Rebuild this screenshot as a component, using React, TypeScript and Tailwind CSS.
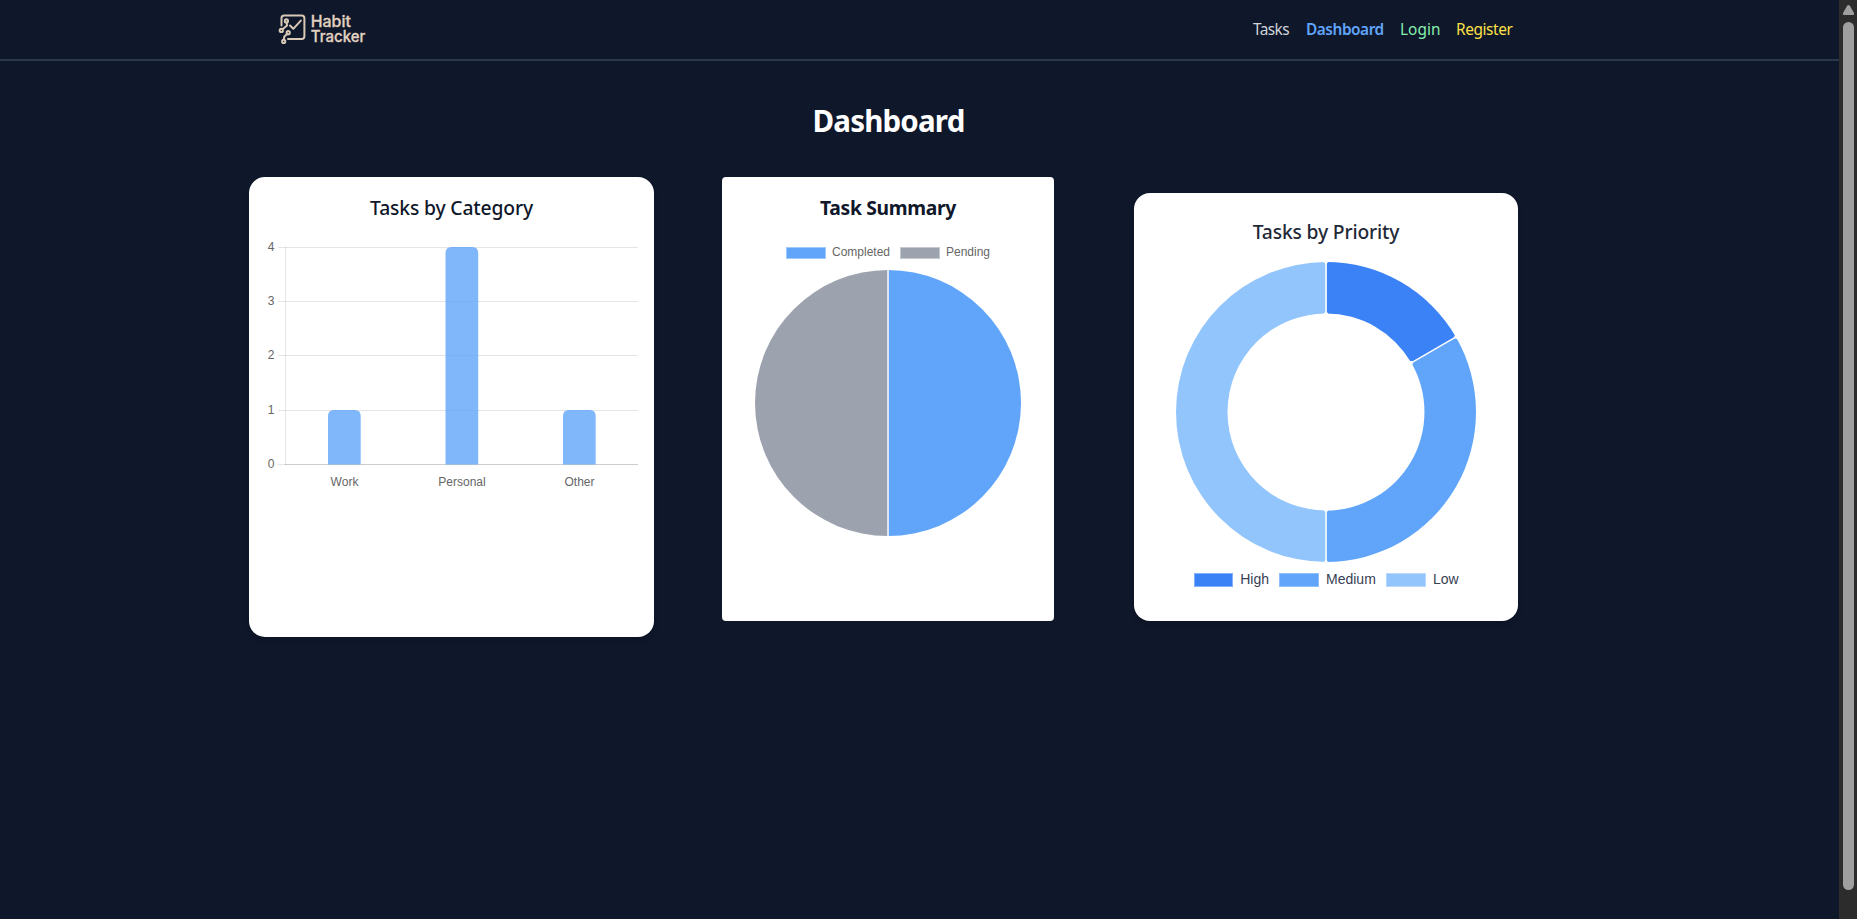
import React from "react";

const CANVAS_FONT = '"Liberation Sans", Arial, sans-serif';

function Logo() {
  return (
    <svg width="92" height="36" viewBox="0 0 92 36" fill="none" role="img" aria-label="Habit Tracker">
      <g stroke="#d8c9b5" strokeWidth="2" strokeLinecap="round" strokeLinejoin="round">
        <path d="M5.500 16.500V9.200Q5.500 6.600 8.200 6.600H25.700Q28.400 6.600 28.400 9.200V27.200Q28.400 29.900 25.700 29.900H12" />
        <path d="M14 16.500l3.300 3.300L24.800 11.600" />
        <path d="M10.700 13.500L11 16.500L6.600 20.300" />
        <path d="M11.200 25L8.300 27.500L7.800 31" />
        <circle cx="10.400" cy="11.900" r="1.600" />
        <circle cx="5.300" cy="21.400" r="1.600" />
        <circle cx="12.200" cy="23.700" r="1.600" />
        <circle cx="7.700" cy="32.400" r="1.600" />
      </g>
      <g fill="#e0d2c0" stroke="#e0d2c0" strokeWidth="0.3" fontFamily='Inter, "Liberation Sans", sans-serif' fontWeight="500" fontSize="15.5">
        <text x="34.800" y="17.500" textLength="40" lengthAdjust="spacingAndGlyphs">Habit</text>
        <text x="34.800" y="32.600" textLength="54.500" lengthAdjust="spacingAndGlyphs">Tracker</text>
      </g>
    </svg>
  );
}

const bars = [
  { label: "Work", value: 1, x: 79 },
  { label: "Personal", value: 4, x: 196.5 },
  { label: "Other", value: 1, x: 314 },
];

const ticks = [
  { n: 4, y: 11.5 },
  { n: 3, y: 65.5 },
  { n: 2, y: 119.5 },
  { n: 1, y: 174.5 },
  { n: 0, y: 228.5 },
];

function BarChart() {
  return (
    <svg width="373" height="260" viewBox="0 0 373 260" fontFamily={CANVAS_FONT} fontSize="12" fill="#666">
      {ticks.map((t) => (
        <g key={t.n}>
          <path d={`M13 ${t.y}H373`} stroke="#000" strokeOpacity="0.1" />
          <text x="9.500" y={t.y + 3.5} textAnchor="end">{t.n}</text>
        </g>
      ))}
      <path d="M20.500 11V229" stroke="#000" strokeOpacity="0.1" />
      <path d="M20 228.500H373" stroke="#000" strokeOpacity="0.1" />
      {bars.map((b) => {
        const top = b.value === 4 ? 11 : 174;
        const l = b.x - 16;
        const r = b.x + 16.7;
        return (
          <g key={b.label}>
            <path
              d={`M${l} 228.600V${top + 6}Q${l} ${top} ${l + 6} ${top}H${r - 6}Q${r} ${top} ${r} ${top + 6}V228.600Z`}
              fill="#60a5fa"
              fillOpacity="0.8"
            />
            <text x={b.x + 0.5} y="250" textAnchor="middle">{b.label}</text>
          </g>
        );
      })}
    </svg>
  );
}

function PieChart() {
  return (
    <svg width="300" height="301" viewBox="0 0 300 301" fontFamily={CANVAS_FONT} fontSize="12" fill="#666">
      <rect x="48.500" y="11.500" width="39" height="11" fill="#60a5fa" stroke="#a0c9fc" />
      <text x="94" y="20">Completed</text>
      <rect x="162.500" y="11.500" width="39" height="11" fill="#9ca3af" stroke="#c4c8cf" />
      <text x="208" y="20">Pending</text>
      <path d="M150 34A133 133 0 0 1 150 300Z" fill="#60a5fa" />
      <path d="M150 34A133 133 0 0 0 150 300Z" fill="#9ca3af" />
      <path d="M150 34V300" stroke="#dde5ef" strokeWidth="2" />
    </svg>
  );
}

function DoughnutChart() {
  return (
    <svg width="336" height="336" viewBox="0 0 336 336" fontFamily={CANVAS_FONT} fontSize="14" fill="#374151">
      <path d="M168 1A150 150 0 0 1 297.900 76L253.300 101.800A98.500 98.500 0 0 0 168 52.500Z" fill="#3b82f6" />
      <path d="M297.900 76A150 150 0 0 1 168 301V249.500A98.500 98.500 0 0 0 253.300 101.800Z" fill="#60a5fa" />
      <path d="M168 301A150 150 0 0 1 168 1V52.500A98.500 98.500 0 0 0 168 249.500Z" fill="#93c5fd" />
      <g stroke="#e3eefb" strokeWidth="2">
        <path d="M168 0V53" />
        <path d="M168 249V302" />
        <path d="M298.500 75.600L252.800 102.100" stroke="#fff" strokeWidth="1.500" />
      </g>
      <g fill="#fff">
        <path d="M165.500 0.500H170.500L168 3.500Z" />
        <path d="M165.500 53H170.500L168 50Z" />
        <path d="M165.500 249H170.500L168 252Z" />
        <path d="M165.500 301.500H170.500L168 298.500Z" />
        <path d="M165.500 0.500H170.500L168 3.500Z" transform="rotate(60 168 151)" />
        <path d="M165.500 53H170.500L168 50Z" transform="rotate(60 168 151)" />
      </g>
      <rect x="36.500" y="312.500" width="38" height="13" fill="#3b82f6" stroke="#82b0f9" />
      <text x="82.200" y="323">High</text>
      <rect x="121.500" y="312.500" width="39" height="13" fill="#60a5fa" stroke="#90c0fb" />
      <text x="168" y="323">Medium</text>
      <rect x="228.500" y="312.500" width="39" height="13" fill="#93c5fd" stroke="#b8d9fe" />
      <text x="275" y="323">Low</text>
    </svg>
  );
}

export default function App() {
  return (
    <div className="flex h-[919px] overflow-hidden bg-[#0f172a] font-['Noto_Sans','Open_Sans',sans-serif]">
      <div className="min-w-0 flex-1">
        <header className="h-[61px] border-b-2 border-[#2b384a]">
          <div className="flex h-[59px] items-center justify-between pr-[326px] pl-[276px]">
            <a href="#" className="block pb-[5px]">
              <Logo />
            </a>
            <nav className="flex gap-4 text-[15.4px] leading-6">
              <a href="#" className="w-[37px] whitespace-nowrap tracking-[-0.6px] text-[#d1d5db]">Tasks</a>
              <a href="#" className="w-[78px] whitespace-nowrap font-semibold tracking-[-0.45px] text-[#60a5fa]">Dashboard</a>
              <a href="#" className="w-[40px] whitespace-nowrap tracking-[0.02px] text-[#86efac]">Login</a>
              <a href="#" className="w-[57px] whitespace-nowrap tracking-[-0.4px] text-[#fde047]">Register</a>
            </nav>
          </div>
        </header>
        <main className="pt-[42px]">
          <h1 className="h-9 pr-[62px] text-center text-[29.5px] leading-[35px] font-bold tracking-[-0.8px] text-white">Dashboard</h1>
          <div className="flex items-start pt-[38px] pl-[249px]">
            <section className="flex h-[460px] w-[405px] flex-col items-center rounded-2xl bg-white pt-4 shadow-md">
              <h2 className="h-7 text-[19.3px] leading-[30px] font-medium tracking-[-0.15px] text-[#0f172a]">Tasks by Category</h2>
              <div className="pt-[15px]">
                <BarChart />
              </div>
            </section>
            <section className="ml-[68px] flex h-[444px] w-[332px] flex-col items-center rounded bg-white pt-4">
              <h2 className="h-7 text-[19.3px] leading-[30px] font-bold tracking-[-0.33px] text-[#0f172a]">Task Summary</h2>
              <div className="pt-[15px]">
                <PieChart />
              </div>
            </section>
            <section className="mt-4 ml-20 flex h-[428px] w-[384px] flex-col items-center rounded-2xl bg-white pt-6 shadow-md">
              <h2 className="h-7 text-[19.3px] leading-[30px] font-medium tracking-[-0.17px] text-[#1f2937]">Tasks by Priority</h2>
              <div className="pt-4">
                <DoughnutChart />
              </div>
            </section>
          </div>
        </main>
      </div>
      <div className="flex w-[18px] flex-col items-center bg-[#2c2c2c]">
        <svg width="18" height="22" viewBox="0 0 18 22">
          <path d="M8.300 5.600Q9.500 4.200 10.700 5.600L15 13Q15.700 15 14 15H5Q3.300 15 4 13Z" fill="#9f9f9f" />
        </svg>
        <div className="ml-px h-[868px] w-[11px] rounded-full bg-[#9f9f9f]" />
      </div>
    </div>
  );
}
